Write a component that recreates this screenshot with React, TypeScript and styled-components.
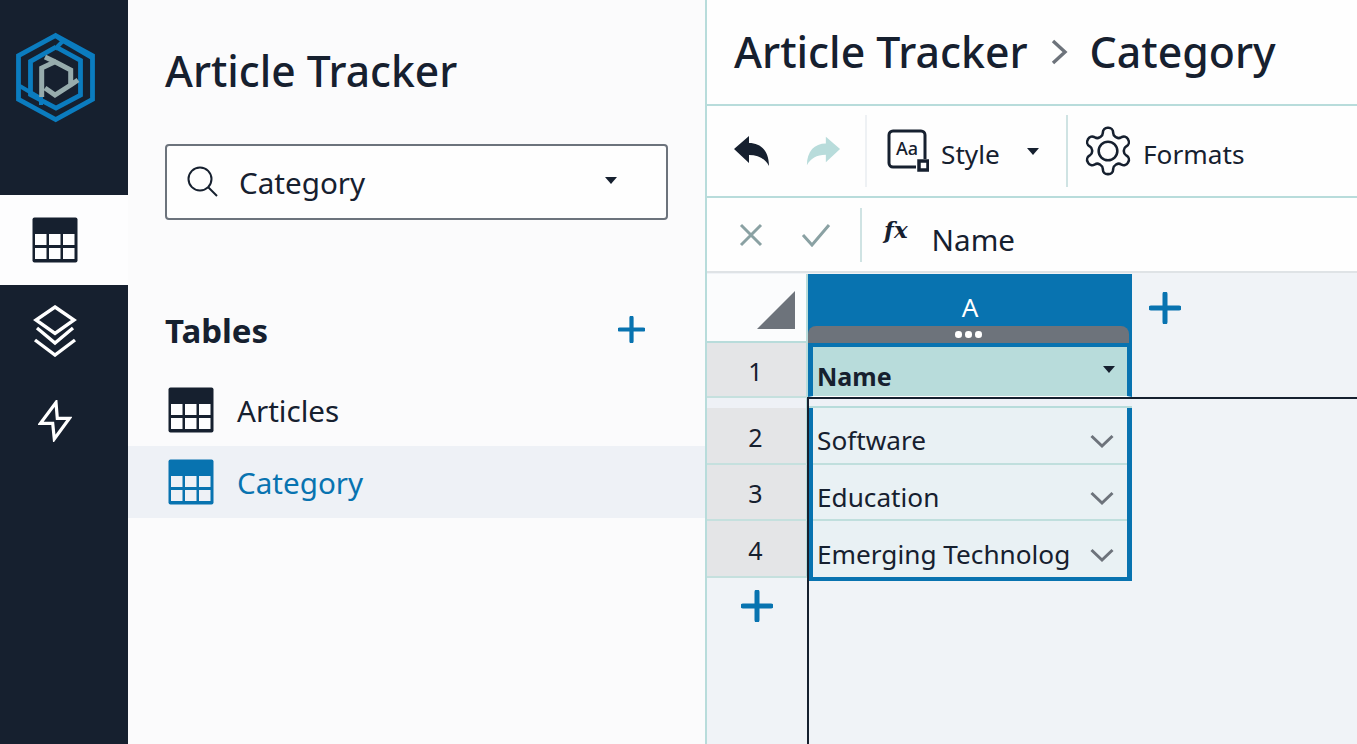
import React from "react";
import styled, { createGlobalStyle } from "styled-components";

const Global = createGlobalStyle`
  html, body { margin: 0; padding: 0; height: 100%; overflow: hidden; }
  body { font-family: "Noto Sans", "Open Sans", sans-serif; color: #16202f; }
  #root { height: 744px; }
  * { box-sizing: border-box; }
`;

const NAVY = "#16202f";
const BLUE = "#0873b0";
const TEAL = "#b8dcdb";

const Page = styled.div`
  display: flex;
  width: 1357px;
  height: 744px;
  overflow: hidden;
  background: #fbfbfc;
`;

const Rail = styled.nav`
  width: 128px;
  flex: none;
  background: ${NAVY};
  display: flex;
  flex-direction: column;
`;

const LogoBox = styled.div`
  height: 195px;
  padding: 32px 0 0 15px;
`;

const RailItem = styled.div<{ $active?: boolean; $h: number; $pt: number }>`
  height: ${(p) => p.$h}px;
  padding: ${(p) => p.$pt}px 18px 0 0;
  background: ${(p) => (p.$active ? "#fdfdfe" : "transparent")};
  display: flex;
  justify-content: center;
  align-items: flex-start;
`;

const Panel = styled.aside`
  width: 577px;
  flex: none;
  background: #fbfbfc;
  display: flex;
  flex-direction: column;
`;

const AppTitle = styled.h1`
  margin: 0;
  padding: 39px 0 0 37px;
  height: 144px;
  font-size: 42.6px;
  line-height: 62px;
  font-weight: 500;
  color: ${NAVY};
  white-space: nowrap;
`;

const SelectBox = styled.div`
  margin-left: 37px;
  width: 503px;
  height: 76px;
  border: 2px solid #6c737c;
  border-radius: 4px;
  background: #fefefe;
  display: flex;
  align-items: center;
  padding-left: 20px;
  font-size: 29.6px;
  color: ${NAVY};
`;

const SelectText = styled.span`
  margin-left: 20px;
  flex: 1;
`;

const Caret = styled.span<{ $ml?: number; $mr?: number; $mt?: number }>`
  width: 0;
  height: 0;
  border-left: 6px solid transparent;
  border-right: 6px solid transparent;
  border-top: 7px solid ${NAVY};
  margin: ${(p) => p.$mt ?? 0}px ${(p) => p.$mr ?? 0}px 0 ${(p) => p.$ml ?? 0}px;
`;

const TablesHead = styled.div`
  margin-top: 86px;
  height: 48px;
  padding: 0 60px 0 37px;
  display: flex;
  align-items: center;
  justify-content: space-between;
`;

const TablesTitle = styled.h2`
  margin: 0;
  font-size: 33px;
  font-weight: 700;
  color: ${NAVY};
`;

const TablesPlus = styled.span`
  display: flex;
  margin-top: -2px;
`;

const TableRow = styled.div<{ $active?: boolean }>`
  height: 72px;
  display: flex;
  align-items: center;
  padding-left: 40px;
  gap: 23px;
  font-size: 29.6px;
  background: ${(p) => (p.$active ? "#eef1f6" : "transparent")};
  color: ${(p) => (p.$active ? BLUE : NAVY)};
`;

const TableList = styled.div`
  margin-top: 20px;
`;

const Main = styled.main`
  flex: 1;
  min-width: 0;
  border-left: 2px solid ${TEAL};
  display: flex;
  flex-direction: column;
  background: #f0f3f7;
`;

const Crumbs = styled.header`
  height: 106px;
  flex: none;
  background: #fefefe;
  border-bottom: 2px solid ${TEAL};
  display: flex;
  align-items: center;
  padding: 0 0 1px 27px;
  font-size: 42.8px;
  font-weight: 500;
  color: ${NAVY};
  white-space: nowrap;
`;

const CrumbSep = styled.span`
  display: flex;
  margin: 0 22px 0 22px;
`;

const Toolbar = styled.div`
  height: 92px;
  flex: none;
  background: #fefefe;
  border-bottom: 2px solid ${TEAL};
  display: flex;
  align-items: center;
  font-size: 26.2px;
`;

const ToolGroup = styled.div<{ $w: number; $divider: "faint" | "strong" }>`
  width: ${(p) => p.$w}px;
  height: 72px;
  display: flex;
  align-items: center;
  border-right: 2px solid ${(p) => (p.$divider === "strong" ? "#cfe3e3" : "#eef1f4")};
`;

const ToolLabel = styled.span<{ $ml: number }>`
  margin: 5px 0 0 ${(p) => p.$ml}px;
`;

const ToolIcon = styled.svg<{ $ml: number }>`
  flex: none;
  margin-left: ${(p) => p.$ml}px;
`;

const FormulaBar = styled.div`
  height: 75px;
  flex: none;
  background: #fefefe;
  border-bottom: 2px solid #dfe3e6;
  display: flex;
  align-items: center;
`;

const FormulaActions = styled.div`
  width: 155px;
  height: 54px;
  border-right: 2px solid #cfe3e3;
  display: flex;
  align-items: center;
  padding-left: 32px;
  gap: 38px;
`;

const FxMark = styled.span`
  margin-left: 22px;
  font-family: "DejaVu Serif", "Liberation Serif", serif;
  font-style: italic;
  font-weight: 700;
  font-size: 23px;
  color: ${NAVY};
  position: relative;
  top: -5px;
`;

const FormulaText = styled.span`
  margin: 9px 0 0 24px;
  font-size: 29.6px;
  color: ${NAVY};
`;

const Sheet = styled.div`
  flex: 1;
  display: flex;
  position: relative;
  padding-top: 1px;
`;

const Gutter = styled.div`
  width: 101px;
  flex: none;
  display: flex;
  flex-direction: column;
`;

const Corner = styled.div`
  height: 69px;
  background: #fbfcfd;
  border-right: 2px solid ${TEAL};
  border-bottom: 2px solid ${TEAL};
  display: flex;
  justify-content: flex-end;
  align-items: flex-end;
  padding: 0 11px 12px 0;
`;

const RowNum = styled.div<{ $h: number }>`
  height: ${(p) => p.$h}px;
  background: #e4e5e7;
  border-bottom: 2px solid #c5e0de;
  border-right: 2px solid ${TEAL};
  display: flex;
  align-items: center;
  justify-content: center;
  font-size: 25px;
  padding: 2px 2px 0 0;
  color: ${NAVY};
`;

const RowGap = styled.div`
  height: 10px;
  background: #eef1f6;
  border-right: 2px solid ${TEAL};
`;

const AddRow = styled.div`
  display: flex;
  justify-content: center;
  padding: 12px 2px 0 0;
`;

const Column = styled.div`
  width: 324px;
  flex: none;
  display: flex;
  flex-direction: column;
`;

const ColHead = styled.div`
  height: 52px;
  background: ${BLUE};
  color: #fff;
  text-align: center;
  font-size: 26px;
  line-height: 66px;
`;

const HandleWrap = styled.div`
  height: 17px;
  background: ${BLUE};
`;

const Handle = styled.div`
  height: 17px;
  margin-right: 3px;
  background: #6d737b;
  border-radius: 8px 8px 0 0;
  display: flex;
  justify-content: center;
  align-items: center;
  gap: 3.5px;
`;

const Dot = styled.span`
  width: 6.5px;
  height: 6.5px;
  border-radius: 50%;
  background: #fff;
`;

const HeaderCell = styled.div`
  height: 54px;
  background: ${TEAL};
  border: solid ${BLUE};
  border-width: 4px 5px 1px 5px;
  border-bottom-color: #fff;
  font-size: 25px;
  font-weight: 700;
  padding: 13px 0 0 4px;
  line-height: 32px;
  position: relative;
  color: ${NAVY};
`;

const HeadCaret = styled.span`
  position: absolute;
  right: 12px;
  top: 19px;
  width: 0;
  height: 0;
  border-left: 6px solid transparent;
  border-right: 6px solid transparent;
  border-top: 7px solid ${NAVY};
`;

const FrozenGap = styled.div`
  height: 11px;
  background: #eef1f6;
  border-bottom: 2px solid ${TEAL};
`;

const Body = styled.div`
  border: solid ${BLUE};
  border-width: 0 5px 4px 5px;
`;

const Cell = styled.div<{ $h: number; $pb: number; $last?: boolean }>`
  height: ${(p) => p.$h}px;
  background: #e9f1f4;
  border-bottom: ${(p) => (p.$last ? "0" : `2px solid #c0dfdd`)};
  display: flex;
  align-items: flex-end;
  justify-content: space-between;
  padding: 0 13px ${(p) => p.$pb}px 4px;
  font-size: 26.2px;
  line-height: 34px;
  color: ${NAVY};
  white-space: nowrap;
`;

const CellChevron = styled.svg`
  flex: none;
  margin-bottom: 8px;
`;

const AddCol = styled.div`
  padding: 18px 0 0 17px;
`;

const FreezeLines = styled.div`
  position: absolute;
  left: 100px;
  right: 0;
  top: 124px;
  bottom: 0;
  border-top: 2px solid ${NAVY};
  border-left: 2px solid ${NAVY};
  pointer-events: none;
`;

const GridIcon = ({ color = NAVY, cell = "#fdfdfe" }: { color?: string; cell?: string }) => (
  <svg width="46" height="46" viewBox="0 0 46 46">
    <rect x="0.5" y="0.5" width="45" height="45" rx="2" fill={color} />
    {[3, 17, 31].map((x) =>
      [17, 31].map((y) => <rect key={`${x}-${y}`} x={x} y={y} width="11.5" height="11" fill={cell} />)
    )}
  </svg>
);

const Plus = ({ size = 32 }: { size?: number }) => (
  <svg width={size} height={size} viewBox="0 0 32 32" style={{ display: "block" }}>
    <path d="M2 16h28M16 2v28" stroke={BLUE} strokeWidth="5" strokeLinecap="round" />
  </svg>
);

const Logo = () => (
  <svg width="82" height="92" viewBox="15 32 82 92" fill="none">
    <path d="M55.7 35.5L92.5 55.7V99.3L55.7 119.5L18.5 99.3V55.7Z" stroke="#0b7cbf" strokeWidth="4.8" />
    <path d="M55.7 36L63 41L55 49M63 41L92 58" stroke="#0b7cbf" strokeWidth="4" />
    <path d="M56 47L30.5 61.5V94.500L56 108L80.500 95V60.500L56 47" stroke="#0b7cbf" strokeWidth="4.8" />
    <path d="M18 85L41 98.500V105" stroke="#0b7cbf" strokeWidth="4" />
    <path d="M41.7 97V68L55 61.700L70.700 70V85L55 95L45 88M45 57L55 61.700M70.700 85L78 80" stroke="#97acad" strokeWidth="5" />
  </svg>
);

const Chevron = () => (
  <CellChevron width="24" height="15" viewBox="0 0 24 15">
    <path d="M1.5 2l10.5 10L22.5 2" fill="none" stroke="#6d737b" strokeWidth="3" />
  </CellChevron>
);

export default function App() {
  return (
    <Page>
      <Global />
      <Rail>
        <LogoBox>
          <Logo />
        </LogoBox>
        <RailItem $active $h={90} $pt={22}>
          <GridIcon />
        </RailItem>
        <RailItem $h={90} $pt={20}>
          <svg width="44" height="52" viewBox="0 0 44 52" fill="none" stroke="#fff" strokeWidth="3.4">
            <path d="M22 2L41 15L22 28.500L3 15Z" />
            <path d="M4 23L22 38L40 23" />
            <path d="M2 35L22 50L42 35" />
          </svg>
        </RailItem>
        <RailItem $h={70} $pt={25}>
          <svg width="34" height="42" viewBox="0 0 34 42" fill="none" stroke="#fff" strokeWidth="3.2">
            <path d="M18 2.500L2.500 23.300H14.700L16.300 39L31.500 18.300H19.300Z" />
          </svg>
        </RailItem>
      </Rail>
      <Panel>
        <AppTitle>Article Tracker</AppTitle>
        <SelectBox>
          <svg width="32" height="32" viewBox="0 0 32 32" fill="none" stroke={NAVY} strokeWidth="2">
            <circle cx="13" cy="13" r="11.5" />
            <path d="M21 21L30 30" />
          </svg>
          <SelectText>Category</SelectText>
          <Caret $mr={49} $mt={-3} />
        </SelectBox>
        <TablesHead>
          <TablesTitle>Tables</TablesTitle>
          <TablesPlus>
            <Plus size={27} />
          </TablesPlus>
        </TablesHead>
        <TableList>
          <TableRow>
            <GridIcon />
            Articles
          </TableRow>
          <TableRow $active>
            <GridIcon color={BLUE} cell="#eef1f6" />
            Category
          </TableRow>
        </TableList>
      </Panel>
      <Main>
        <Crumbs>
          Article Tracker
          <CrumbSep>
            <svg width="18" height="28" viewBox="0 0 18 28" fill="none" stroke="#6d737b" strokeWidth="3.4">
              <path d="M3 3L15 14L3 25" />
            </svg>
          </CrumbSep>
          Category
        </Crumbs>
        <Toolbar>
          <ToolGroup $w={160} $divider="faint">
            <ToolIcon $ml={26} width="38" height="32" viewBox="0 0 38 32">
              <path d="M1 14L16 1V8C28 8 36 16 36 31C32 24 26 20 16 20V28Z" fill={NAVY} />
            </ToolIcon>
            <ToolIcon $ml={34} width="36" height="32" viewBox="0 0 38 32">
              <path d="M37 14L22 1V8C10 8 2 16 2 31C6 24 12 20 22 20V28Z" fill={TEAL} />
            </ToolIcon>
          </ToolGroup>
          <ToolGroup $w={201} $divider="strong">
            <ToolIcon $ml={20} width="42" height="44" viewBox="0 0 42 44" fill="none">
              <path d="M29 38H6a4 4 0 0 1-4-4V6a4 4 0 0 1 4-4h28a4 4 0 0 1 4 4v24" stroke={NAVY} strokeWidth="3" />
              <rect x="32" y="32" width="9" height="9" fill="#fff" stroke={NAVY} strokeWidth="3.5" />
              <text x="9" y="26" fontSize="18" fontWeight="500" fontFamily="Noto Sans" fill={NAVY}>Aa</text>
            </ToolIcon>
            <ToolLabel $ml={12}>Style</ToolLabel>
            <Caret $ml={27} />
          </ToolGroup>
          <ToolIcon $ml={12} width="56" height="56" viewBox="0 0 24 24" fill="none" stroke={NAVY} strokeWidth="1.1">
            <circle cx="12" cy="12" r="4" />
            <path d="M12.2 2h-.4a2 2 0 0 0-2 2v.2a2 2 0 0 1-1 1.7l-.4.3a2 2 0 0 1-2 0l-.2-.1a2 2 0 0 0-2.7.7l-.2.4a2 2 0 0 0 .7 2.7l.2.1a2 2 0 0 1 1 1.7v.5a2 2 0 0 1-1 1.7l-.2.1a2 2 0 0 0-.7 2.7l.2.4a2 2 0 0 0 2.7.7l.2-.1a2 2 0 0 1 2 0l.4.3a2 2 0 0 1 1 1.7v.2a2 2 0 0 0 2 2h.4a2 2 0 0 0 2-2v-.2a2 2 0 0 1 1-1.7l.4-.3a2 2 0 0 1 2 0l.2.1a2 2 0 0 0 2.7-.7l.2-.4a2 2 0 0 0-.7-2.7l-.2-.1a2 2 0 0 1-1-1.7v-.5a2 2 0 0 1 1-1.7l.2-.1a2 2 0 0 0 .7-2.7l-.2-.4a2 2 0 0 0-2.7-.7l-.2.1a2 2 0 0 1-2 0l-.4-.3a2 2 0 0 1-1-1.7V4a2 2 0 0 0-2-2z" />
          </ToolIcon>
          <ToolLabel $ml={7}>Formats</ToolLabel>
        </Toolbar>
        <FormulaBar>
          <FormulaActions>
            <svg width="24" height="24" viewBox="0 0 24 24" stroke="#8aa1a3" strokeWidth="3">
              <path d="M2 2L22 22M22 2L2 22" />
            </svg>
            <svg width="30" height="24" viewBox="0 0 30 24" fill="none" stroke="#8aa1a3" strokeWidth="3">
              <path d="M2 12L11 22L28 2" />
            </svg>
          </FormulaActions>
          <FxMark>fx</FxMark>
          <FormulaText>Name</FormulaText>
        </FormulaBar>
        <Sheet>
          <Gutter>
            <Corner>
              <svg width="38" height="38" viewBox="0 0 38 38">
                <path d="M38 0V38H0Z" fill="#6d737b" />
              </svg>
            </Corner>
            <RowNum $h={55}>1</RowNum>
            <RowGap />
            <RowNum $h={57}>2</RowNum>
            <RowNum $h={56}>3</RowNum>
            <RowNum $h={57}>4</RowNum>
            <AddRow>
              <Plus size={32} />
            </AddRow>
          </Gutter>
          <Column>
            <ColHead>A</ColHead>
            <HandleWrap>
              <Handle>
                <Dot />
                <Dot />
                <Dot />
              </Handle>
            </HandleWrap>
            <HeaderCell>
              Name
              <HeadCaret />
            </HeaderCell>
            <FrozenGap />
            <Body>
              <Cell $h={57} $pb={6}>
                Software
                <Chevron />
              </Cell>
              <Cell $h={56} $pb={5}>
                Education
                <Chevron />
              </Cell>
              <Cell $h={56} $pb={6} $last>
                Emerging Technolog
                <Chevron />
              </Cell>
            </Body>
          </Column>
          <AddCol>
            <Plus size={32} />
          </AddCol>
          <FreezeLines />
        </Sheet>
      </Main>
    </Page>
  );
}
